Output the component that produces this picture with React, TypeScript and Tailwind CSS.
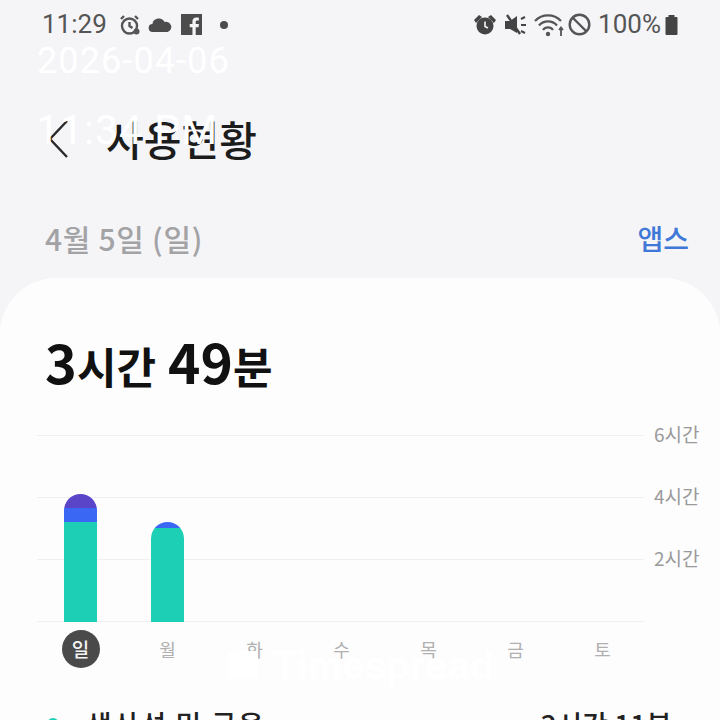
const kr = "font-['Noto_Sans_CJK_KR','Noto_Sans',sans-serif]";

const AlarmIcon = () => (
  <svg viewBox="0 0 22 22" className="w-[22px] h-[22px] text-[#555]" fill="none" stroke="currentColor" strokeWidth="2.4">
    <circle cx="10.500" cy="12" r="7.500" />
    <path d="M2 5l3-3M16 2l3 3M10.500 8v4l3 2" />
    <circle cx="17.500" cy="17.500" r="3" fill="currentColor" stroke="none" />
  </svg>
);

const CloudIcon = () => (
  <svg viewBox="0 0 24 16" className="w-6 h-4 text-[#4c4c4c]" fill="currentColor">
    <path d="M5 15a4 4 0 0 1-.6-8A6.500 6.500 0 0 1 16.600 5 5 5 0 0 1 19.500 15z" />
  </svg>
);

const FacebookIcon = () => (
  <svg viewBox="0 0 20 20" className="w-[21px] h-[21px] text-[#4c4c4c]" fill="currentColor">
    <path d="M0 0h20v20h-6v-7.500h2.700l.4-3H14V7.600c0-.9.300-1.400 1.500-1.400H17V3.500c-.5 0-1.300-.1-2.300-.1-2.300 0-3.800 1.400-3.800 3.800v2.300H8.300v3h2.600V20H0z" />
  </svg>
);

const AlarmFilled = () => (
  <svg viewBox="0 0 22 22" className="w-[22px] h-[22px] text-[#444]" fill="currentColor">
    <circle cx="11" cy="12" r="8.500" />
    <path d="M0 6l5-5 3 2-6 6zM22 6l-5-5-3 2 6 6z" />
    <path d="M11 7.500v5l3 1.500" stroke="#f5f5f8" strokeWidth="1.600" fill="none" />
  </svg>
);

const MuteIcon = () => (
  <svg viewBox="0 0 22 22" className="w-[22px] h-[22px] text-[#444]" fill="currentColor">
    <path d="M0 7h5l7-5v17l-7-4H0z" />
    <path d="M2 1l13 19" stroke="#444" strokeWidth="2.400" />
    <path d="M16 5l4-2M16 11h5M16 17l4 2" stroke="#444" strokeWidth="2" />
  </svg>
);

const WifiIcon = () => (
  <svg viewBox="0 0 31 24" className="w-[31px] h-[24px] text-[#555]" fill="none" stroke="currentColor" strokeWidth="2.200">
    <path d="M1 8a18 18 0 0 1 26 0M5 12.500a12 12 0 0 1 18 0M9 17a6 6 0 0 1 10 0" />
    <circle cx="14" cy="21" r="2.200" fill="currentColor" stroke="none" />
    <path d="M27 23v-8M25 17l2-2.500 2 2.500" strokeWidth="1.800" />
  </svg>
);

const BlockIcon = () => (
  <svg viewBox="0 0 23 23" className="w-[23px] h-[23px] text-[#555]" fill="none" stroke="currentColor" strokeWidth="2.400">
    <circle cx="11.500" cy="11.500" r="9.800" />
    <path d="M5 5l13 13" />
  </svg>
);

const BatteryIcon = () => (
  <svg viewBox="0 0 14 22" className="w-[15px] h-[22px] text-[#444]" fill="currentColor">
    <path d="M4 1h6v2h2a1 1 0 0 1 1 1v16a1 1 0 0 1-1 1H2a1 1 0 0 1-1-1V4a1 1 0 0 1 1-1h2z" />
  </svg>
);

const StatusBar = () => (
  <div className="flex items-center justify-between h-[49px] pl-[42px] pr-[41px] font-['Roboto',sans-serif] text-[#555] text-[26px]">
    <div className="flex items-center">
      <span className="mr-[12px]">11:29</span>
      <AlarmIcon />
      <span className="ml-[7px]"><CloudIcon /></span>
      <span className="ml-[9px]"><FacebookIcon /></span>
      <span className="ml-[18px] w-2 h-2 rounded-full bg-[#4c4c4c]" />
    </div>
    <div className="flex items-center">
      <AlarmFilled />
      <span className="ml-[9px]"><MuteIcon /></span>
      <span className="ml-[7px]"><WifiIcon /></span>
      <span className="ml-[3px]"><BlockIcon /></span>
      <span className="ml-[7px]">100%</span>
      <span className="ml-[3px]"><BatteryIcon /></span>
    </div>
  </div>
);

const Gridline = ({ label }: { label?: string }) => (
  <div className="relative h-px bg-[#f0f0f0]">
    {label && (
      <span className="absolute left-[617px] -top-[13px] whitespace-nowrap text-[19px] leading-[24px] text-[#9a9a9a]">
        {label}
      </span>
    )}
  </div>
);

const days = ["일", "월", "화", "수", "목", "금", "토"];

const App = () => {
  return (
    <div className={`relative w-[720px] h-[720px] overflow-hidden bg-[#f5f5f8] ${kr}`}>
      <StatusBar />

      <div className="flex items-center h-[88px] mt-[46px] pl-[46px]">
        <svg viewBox="0 0 24 40" className="w-6 h-10 text-[#2a2a2a]" fill="none" stroke="currentColor" strokeWidth="2.400">
          <path d="M21 2L4 20l17 18" />
        </svg>
        <h1 className="ml-[36px] text-[41px] font-medium text-[#1c1c1c]">사용현황</h1>
      </div>

      <div className="flex items-center justify-between h-[64px] pl-[45px] pr-[31px] mt-[23px]">
        <span className="text-[30px] font-medium text-[#a3a3a6] tracking-[0.7px]">4월 5일 (일)</span>
        <span className="text-[28px] font-medium text-[#3f78d6]">앱스</span>
      </div>

      <div className="mt-[8px] h-[500px] rounded-t-[56px] bg-[#fdfdfd] px-[37px]">
        <div className="pt-[50px] pl-[8px] h-[157px] text-[#111] font-bold flex items-baseline">
          <span className="text-[54px] leading-[64px]">3</span>
          <span className="text-[43px] leading-[64px]">시간</span>
          <span className="text-[55px] leading-[64px] ml-[12px]">49</span>
          <span className="text-[43px] leading-[64px]">분</span>
        </div>

        <div className="relative w-[607px] h-[187px] flex flex-col justify-between">
          <Gridline label="6시간" />
          <Gridline label="4시간" />
          <Gridline label="2시간" />
          <Gridline />
          <div className="absolute bottom-0 left-[27px] w-[33px] h-[128px] rounded-t-full overflow-hidden flex flex-col">
            <div className="h-[14px] bg-[#5a45c8]" />
            <div className="h-[14px] bg-[#3a68f5]" />
            <div className="flex-1 bg-[#1dcfb5]" />
          </div>
          <div className="absolute bottom-0 left-[114px] w-[33px] h-[100px] rounded-t-full overflow-hidden flex flex-col">
            <div className="h-[6px] bg-[#3a68f5]" />
            <div className="flex-1 bg-[#1dcfb5]" />
          </div>
        </div>

        <div className="mt-[8px] grid grid-cols-7 w-[609px]">
          {days.map((d, i) => (
            <div key={d} className="flex items-center justify-center h-[38px]">
              {i === 0 ? (
                <span className="w-[38px] h-[38px] rounded-full bg-[#4a4a4a] text-[#f4f4f4] text-[19px] font-medium flex items-center justify-center">
                  {d}
                </span>
              ) : (
                <span className="text-[18px] text-[#b0b0b0]">{d}</span>
              )}
            </div>
          ))}
        </div>

        <div className="mt-[38px] flex items-center justify-between text-[28px] leading-[36px] font-medium text-[#222]">
          <div className="flex items-center">
            <span className="ml-[10px] w-3 h-3 rounded-full bg-[#1dcfb5]" />
            <span className="ml-[27px] tracking-[1.500px]">생산성 및 금융</span>
          </div>
          <span className="mr-[11px]">3시간 11분</span>
        </div>
      </div>

      {/* overlay stamped on the capture */}
      <div className="absolute left-[37px] top-[41px] font-['Roboto',sans-serif] text-white text-[36px] leading-[40px] tracking-[1.100px]">
        2026-04-06
      </div>
      <div className="absolute left-[36px] top-[105px] font-['Roboto',sans-serif] text-white text-[41px] leading-[50px] tracking-[1px]">
        11:34 PM
      </div>
      <div className="absolute left-[228px] top-[645px] flex items-center text-white font-['Inter',sans-serif] font-bold text-[38px] leading-[40px]">
        <span className="w-[30px] h-[28px] mr-[14px] bg-white rounded-[3px]" />
        Timespread
      </div>
    </div>
  );
};

export default App;
